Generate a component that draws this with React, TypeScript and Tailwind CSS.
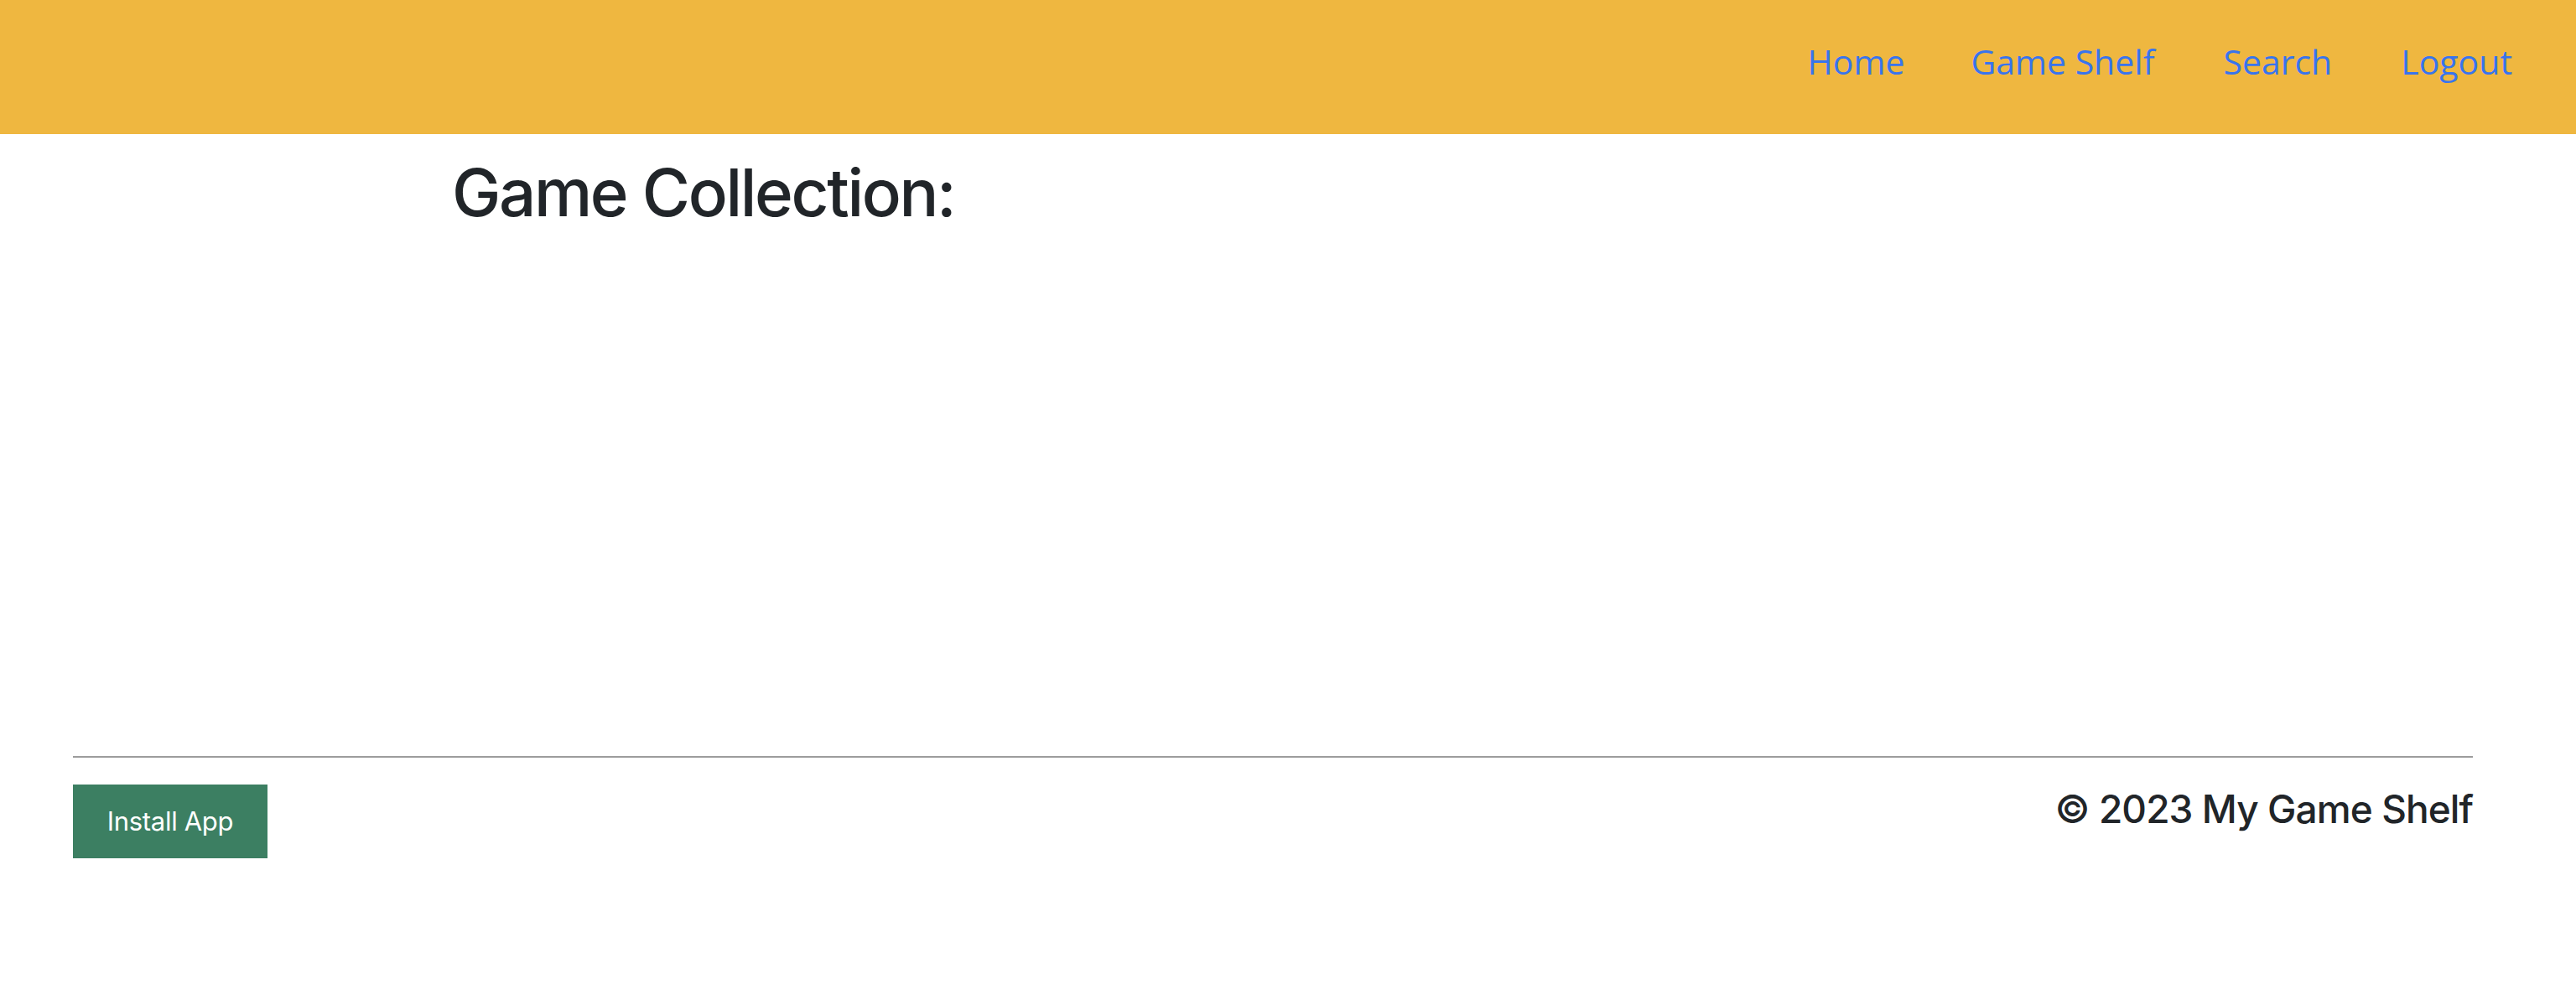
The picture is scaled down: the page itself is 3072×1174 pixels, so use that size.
const links = ['Home', 'Game Shelf', 'Search', 'Logout']

export default function App() {
  return (
    <div className="min-h-screen bg-white font-['Inter','Liberation_Sans',Arial,sans-serif] text-[#212529]">
      {/* Top bar */}
      <header className="h-[160px] bg-[#efb740] flex items-center justify-end pr-[35px] pb-[14px]">
        <nav className="flex">
          {links.map((link) => (
            <a
              key={link}
              href="#"
              className="px-[41px] first:px-[38px] text-[41px] leading-[56px] text-[#3874ee] font-['Open_Sans',sans-serif]"
            >
              {link}
            </a>
          ))}
        </nav>
      </header>

      {/* Collection */}
      <main className="h-[742px] pl-[539px] pt-[22px]">
        <h1 className="text-[78px] leading-[96px] font-medium tracking-[-0.03em]">Game Collection:</h1>
      </main>

      {/* Footer */}
      <footer className="ml-[87px] mr-[123px]">
        <hr className="border-0 border-t-2 border-[#9c9c9c]" />
        <div className="flex justify-between items-start mt-[32px]">
          <button className="w-[232px] h-[88px] bg-[#3c7f62] text-white text-[31px] tracking-[-0.01em] flex items-center justify-center">
            Install App
          </button>
          <p className="text-[46px] leading-[58px] font-medium tracking-[-0.02em]">© 2023 My Game Shelf</p>
        </div>
      </footer>
    </div>
  )
}
